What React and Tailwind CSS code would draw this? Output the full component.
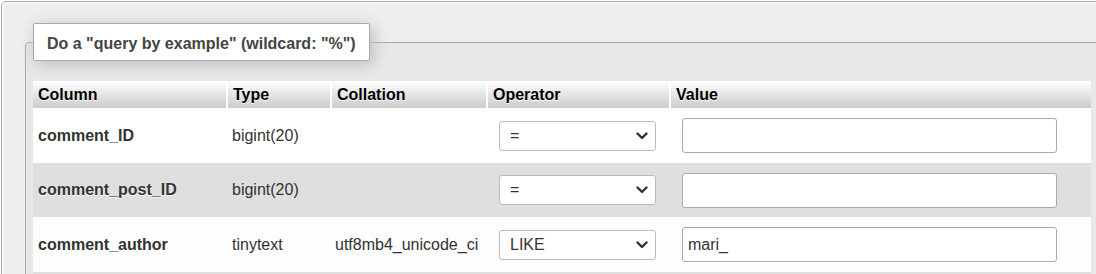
import React from 'react';

const rows = [
  { name: 'comment_ID', type: 'bigint(20)', collation: '', op: '=', value: '', bg: 'bg-white', h: 'h-[55px]' },
  { name: 'comment_post_ID', type: 'bigint(20)', collation: '', op: '=', value: '', bg: 'bg-[#dfdfdf]', h: 'h-[54px]' },
  { name: 'comment_author', type: 'tinytext', collation: 'utf8mb4_unicode_ci', op: 'LIKE', value: 'mari_', bg: 'bg-[#fdfdfd]', h: 'h-[55px]' },
];

const headers = ['Column', 'Type', 'Collation', 'Operator', 'Value'];

const Chevron = () => (
  <svg
    className="pointer-events-none absolute right-[8px] top-1/2 -translate-y-1/2"
    width="12"
    height="8"
    viewBox="0 0 12 8"
    fill="none"
  >
    <polyline points="1.5,1.5 6,6 10.5,1.5" stroke="#333" strokeWidth="2.4" strokeLinecap="round" strokeLinejoin="round" />
  </svg>
);

const OperatorSelect = ({ value }) => (
  <div className="relative ml-[11px] w-[157px]">
    <select
      defaultValue={value}
      className="h-[30px] w-full appearance-none rounded-[3px] border border-[#bbb] bg-white pl-[10px] text-[16px] text-[#333] outline-none"
    >
      <option>{value}</option>
    </select>
    <Chevron />
  </div>
);

export default function App() {
  return (
    <div className="h-[274px] w-[1096px] overflow-hidden bg-white font-['Liberation_Sans',Arial,sans-serif]">
      <div className="ml-px mt-px w-[1130px] rounded-tl-[5px] border border-[#aaa] bg-[#eee] pl-[23px] pt-[40px] shadow-[inset_1px_1px_2px_#fff]">
        <div className="w-[1074px] rounded-tl-[4px] border border-[#aaa] bg-[#e8e8e8] px-[7px] pb-4">
          <div className="-mt-[20px] block w-fit rounded-[2px] border border-[#aaa] bg-white px-[13px] pb-[6px] pt-[10px] text-[16px] font-bold leading-[20px] text-[#444] shadow-[3px_3px_15px_#bbb]">
            Do a "query by example" (wildcard: "%")
          </div>

          <div className="mt-[20px] w-[1058px]">
            <div className="grid h-[27px] grid-cols-[195px_104px_156px_183px_420px] text-[16px] font-bold text-black [text-shadow:0_1px_0_#fff]">
              {headers.map((h, i) => (
                <div
                  key={h}
                  className={`flex items-center bg-gradient-to-b from-white to-[#ccc] px-[5px] ${i < headers.length - 1 ? 'border-r-2 border-white' : ''}`}
                >
                  {h}
                </div>
              ))}
            </div>

            {rows.map((r) => (
              <div
                key={r.name}
                className={`grid grid-cols-[195px_104px_156px_183px_420px] items-center text-[16px] text-[#333] ${r.bg} ${r.h}`}
              >
                <div className="px-[5px] font-bold [text-shadow:0_1px_0_#fff]">{r.name}</div>
                <div className="px-[4px]">{r.type}</div>
                <div className="px-[3px]">{r.collation}</div>
                <div>
                  <OperatorSelect value={r.op} />
                </div>
                <div>
                  <input
                    type="text"
                    defaultValue={r.value}
                    className="ml-[11px] h-[35px] w-[375px] rounded-[3px] border border-[#aaa] bg-white px-[5px] text-[16px] text-[#333] outline-none"
                  />
                </div>
              </div>
            ))}
            <div className="h-[20px] bg-[#dfdfdf]" />
          </div>
        </div>
      </div>
    </div>
  );
}
